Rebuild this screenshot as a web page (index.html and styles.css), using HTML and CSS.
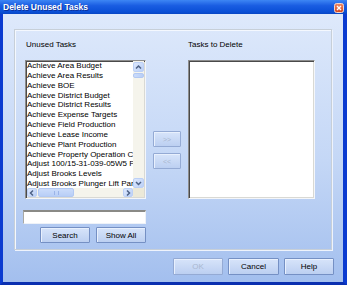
FILE: index.html
```html
<!DOCTYPE html>
<html lang="en">
	<head>
		<meta charset="UTF-8" />
		<title>Delete Unused Tasks</title>
		<link rel="stylesheet" href="styles.css">
	</head>
	<body>
		<div class="window">
			<div class="titlebar">
				<span class="title">Delete Unused Tasks</span>
				<span class="close">
					<svg width="10" height="10" viewBox="0 0 10 10">
						<defs>
							<linearGradient id="cg" x1="0" y1="0" x2="0" y2="1">
								<stop offset="0" stop-color="#f08a64" />
								<stop offset="1" stop-color="#d2461f" />
							</linearGradient>
						</defs>
						<rect x="0.5" y="0.5" width="9" height="9" rx="2" fill="url(#cg)" stroke="#f4d6cc" />
						<path d="M3 3 L7 7 M7 3 L3 7" stroke="#fff" stroke-width="1.4" />
					</svg>
				</span>
			</div>
			<div class="client">
				<div class="group">
					<div class="col-left">
						<div class="label">Unused Tasks</div>
						<div class="listbox">
							<ul class="items">
								<li>Achieve Area Budget</li>
								<li>Achieve Area Results</li>
								<li>Achieve BOE</li>
								<li>Achieve District Budget</li>
								<li>Achieve District Results</li>
								<li>Achieve Expense Targets</li>
								<li>Achieve Field Production</li>
								<li>Achieve Lease Income</li>
								<li>Achieve Plant Production</li>
								<li>Achieve Property Operation Costs</li>
								<li>Adjust 100/15-31-039-05W5 Flow</li>
								<li>Adjust Brooks Levels</li>
								<li>Adjust Brooks Plunger Lift Parameters</li>
							</ul>
							<div class="vscroll">
								<span class="sb-btn">
									<svg width="9" height="8" viewBox="0 0 9 8"><path d="M2 5.5 L4.5 3 L7 5.5" fill="none" stroke="#4d6185" stroke-width="1.5" /></svg>
								</span>
								<span class="vthumb"></span>
								<span class="sb-fill"></span>
								<span class="sb-btn">
									<svg width="9" height="8" viewBox="0 0 9 8"><path d="M2 3 L4.5 5.5 L7 3" fill="none" stroke="#4d6185" stroke-width="1.5" /></svg>
								</span>
							</div>
							<div class="hscroll">
								<span class="sb-btn">
									<svg width="8" height="8" viewBox="0 0 8 8"><path d="M5 1.5 L2.5 4 L5 6.5" fill="none" stroke="#4d6185" stroke-width="1.5" /></svg>
								</span>
								<span class="hthumb"><span class="grip"></span></span>
								<span class="sb-fill"></span>
								<span class="sb-btn">
									<svg width="8" height="8" viewBox="0 0 8 8"><path d="M3 1.5 L5.5 4 L3 6.5" fill="none" stroke="#4d6185" stroke-width="1.5" /></svg>
								</span>
							</div>
							<div class="corner"></div>
						</div>
						<input class="search-box" type="text" />
						<div class="search-buttons">
							<button class="btn btn-small">Search</button>
							<button class="btn btn-small">Show All</button>
						</div>
					</div>
					<div class="col-mid">
						<button class="btn btn-move" disabled>&gt;&gt;</button>
						<button class="btn btn-move" disabled>&lt;&lt;</button>
					</div>
					<div class="col-right">
						<div class="label label-right">Tasks to Delete</div>
						<div class="listbox listbox-empty"></div>
					</div>
				</div>
				<div class="footer">
					<button class="btn btn-ok" disabled>OK</button>
					<button class="btn btn-cancel">Cancel</button>
					<button class="btn btn-help">Help</button>
				</div>
			</div>
		</div>
	</body>
</html>
```

FILE: styles.css
```css
* {
	box-sizing: border-box;
}
body {
	margin: 0;
	font-family: 'Liberation Sans', Arial, sans-serif;
	font-size: 8px;
	color: #000;
	background: #fff;
}
.window {
	width: 347px;
	height: 285px;
	display: flex;
	flex-direction: column;
}
.titlebar {
	height: 14px;
	display: flex;
	align-items: center;
	justify-content: space-between;
	padding: 0 3px 0 3px;
	background: linear-gradient(#3d86f4, #1a5de2 40%, #0a4fd6 85%, #0846c4);
}
.title {
	color: #fff;
	font-weight: bold;
	font-size: 8.5px;
	text-shadow: 1px 1px 0 #0a2f9a;
}
.close {
	display: flex;
	margin-top: 1px;
}
.client {
	flex: 1;
	border-left: 3px solid #0b3bd0;
	border-right: 4px solid #0b3bd0;
	border-bottom: 3px solid #0a2fb0;
	background: linear-gradient(#dee9fb, #c4d7f6 55%, #a3bfee);
	padding: 15px 9px 0 11px;
	display: flex;
	flex-direction: column;
}
.group {
	width: 318px;
	height: 221px;
	border: 1px solid #c7cfd8;
	box-shadow: inset 1px 1px 0 #f4f8fe, 1px 1px 0 #eef3fc;
	padding: 10px 0 0 8px;
	display: flex;
}
.label {
	height: 10px;
	line-height: 10px;
	margin: 0 0 10px 3px;
}
.label-right {
	margin-left: 0;
}
.col-left {
	width: 123px;
	display: flex;
	flex-direction: column;
}
.listbox {
	background: #fff;
	border-top: 1px solid #8d8d8d;
	border-left: 1px solid #8d8d8d;
	border-right: 1px solid #f4f6fa;
	border-bottom: 1px solid #f4f6fa;
	box-shadow: inset 1px 1px 0 #4a4a4a, inset -1px -1px 0 #d9d9d4;
	padding: 1px;
	height: 139px;
}
.col-left .listbox {
	width: 121px;
	margin-left: 2px;
	padding-top: 0;
	display: grid;
	grid-template-columns: 1fr 11px;
	grid-template-rows: 1fr 9px;
}
.items {
	list-style: none;
	margin: 0;
	padding: 0;
	overflow: hidden;
	white-space: nowrap;
	line-height: 9.85px;
}
.items li {
	padding-left: 0;
}
.vscroll {
	background: #f5f4ec;
	display: flex;
	flex-direction: column;
	padding-top: 1px;
}
.hscroll {
	background: #f5f4ec;
	display: flex;
}
.corner {
	background: #ece9d8;
}
.sb-btn {
	display: flex;
	align-items: center;
	justify-content: center;
	flex: none;
	width: 10px;
	height: 10px;
	background: linear-gradient(135deg, #dde8fd, #bbd0f7);
	border: 1px solid #bcd0f6;
	border-radius: 2px;
}
.vscroll .sb-btn {
	width: 11px;
}
.hscroll .sb-btn {
	height: 9px;
}
.sb-fill {
	flex: 1;
}
.vthumb {
	height: 5px;
	margin-top: 1px;
	background: linear-gradient(90deg, #cbdcfb, #b8cef6);
	border: 1px solid #b2c8f2;
	border-radius: 2px;
}
.hthumb {
	width: 36px;
	margin-left: 1px;
	background: linear-gradient(#cbdcfb, #b8cef6);
	border: 1px solid #b2c8f2;
	border-radius: 2px;
	display: flex;
	align-items: center;
	justify-content: center;
}
.grip {
	width: 5px;
	height: 4px;
	border-left: 1px solid #9bb4e8;
	border-right: 1px solid #9bb4e8;
}
.search-box {
	width: 123px;
	height: 14px;
	margin: 11px 0 0 0;
	padding: 0;
	background: #fff;
	border-top: 2px solid #8a8a86;
	border-left: 1px solid #a8a8a4;
	border-right: 1px solid #eef2f8;
	border-bottom: 1px solid #eef2f8;
	outline: none;
}
.search-buttons {
	display: flex;
	gap: 6px;
	margin: 3px 0 0 17px;
}
.btn {
	font-family: 'Liberation Sans', Arial, sans-serif;
	font-size: 8px;
	color: #000;
	padding: 0;
	border: 1px solid #7590c4;
	border-radius: 1px;
	background: linear-gradient(#d7e4fa, #bccff1);
	box-shadow: inset 1px 1px 0 #e8f0fd;
}
.btn:disabled {
	color: #a9b7cf;
	border-color: #94aad4;
}
.btn-small {
	width: 50px;
	height: 16px;
}
.col-mid {
	width: 28px;
	margin-left: 7px;
	padding-top: 91px;
	display: flex;
	flex-direction: column;
	gap: 6px;
}
.btn-move {
	width: 28px;
	height: 16px;
	font-size: 7px;
}
.col-right {
	width: 127px;
	margin-left: 7px;
	display: flex;
	flex-direction: column;
}
.listbox-empty {
	width: 127px;
}
.footer {
	display: flex;
	justify-content: flex-end;
	gap: 5px;
	margin-top: 8px;
}
.btn-ok,
.btn-help {
	width: 50px;
	height: 17px;
}
.btn-cancel {
	width: 51px;
	height: 17px;
}
```
